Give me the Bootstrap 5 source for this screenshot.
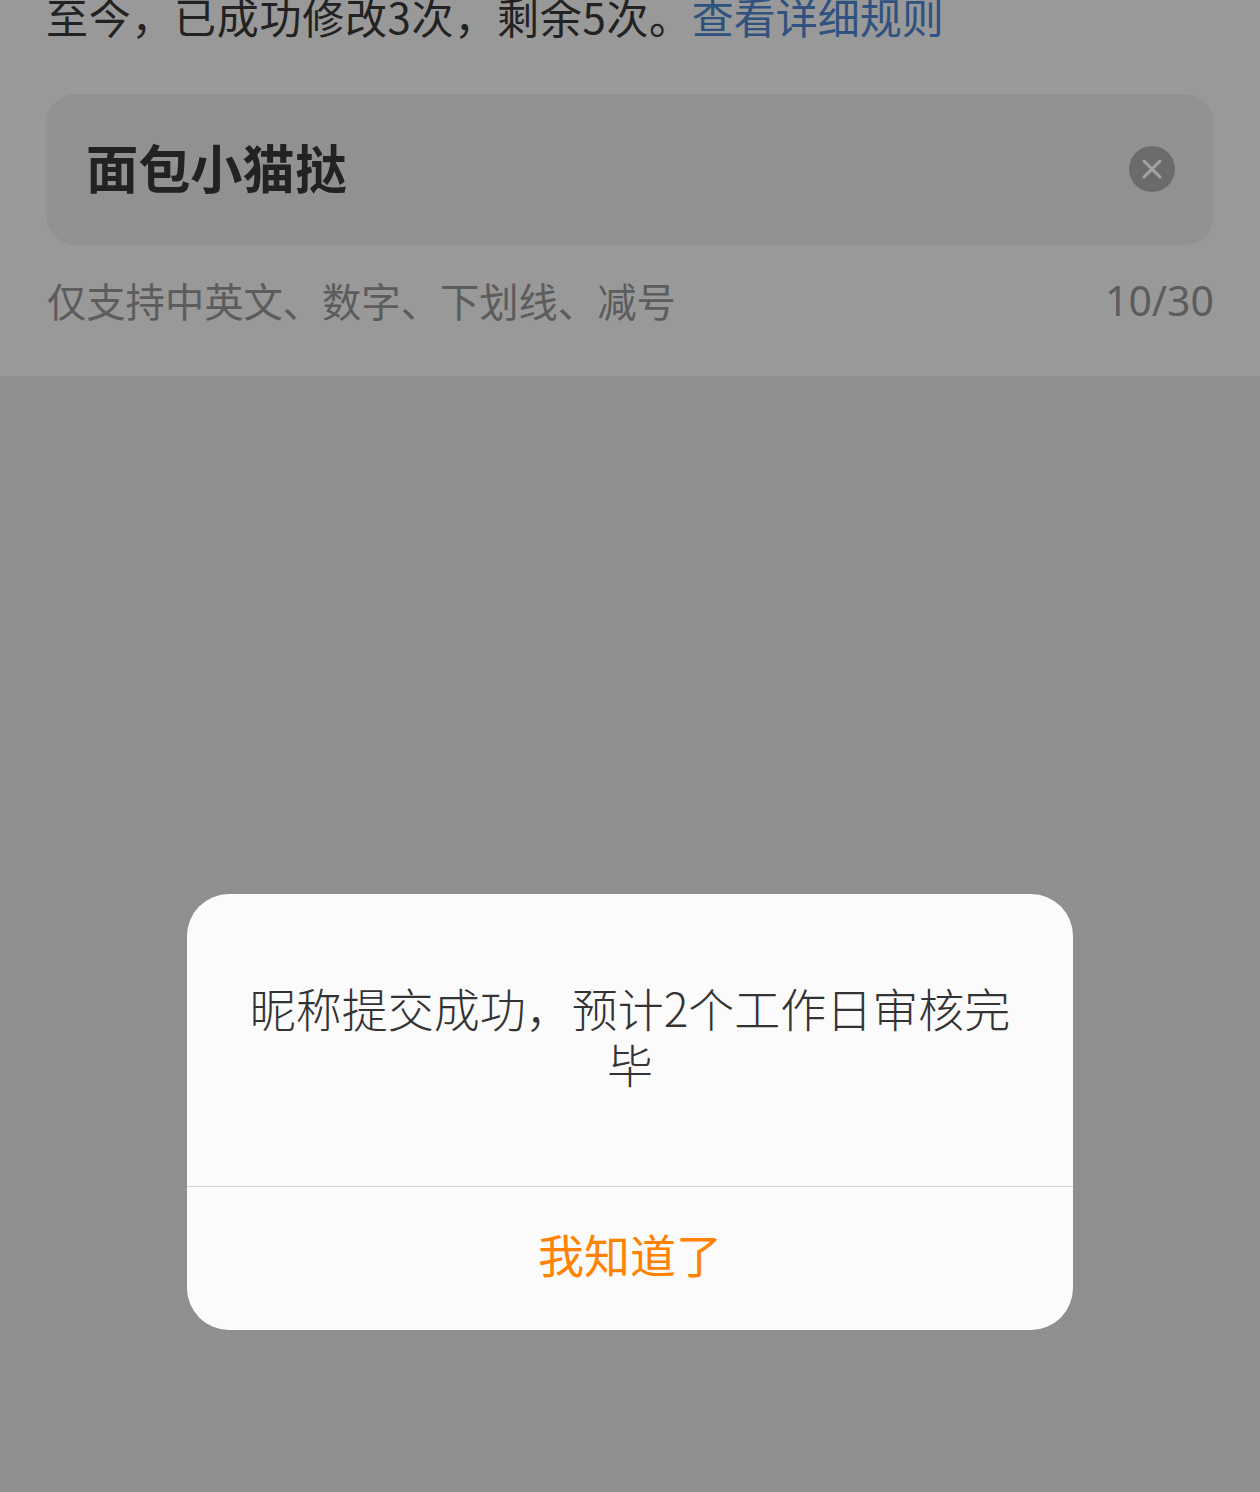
<!DOCTYPE html>
<html lang="zh-CN">
<head>
<meta charset="utf-8">
<title>昵称</title>
<link href="https://cdn.jsdelivr.net/npm/bootstrap@5.3.0/dist/css/bootstrap.min.css" rel="stylesheet">
<style>
html,body{height:1492px;overflow:hidden}
body{background:#8f8f8f;font-family:"Noto Sans CJK SC","Noto Sans",sans-serif;width:1260px}
.top-panel{height:376px;background:#999;padding:0 46px;overflow:hidden}
.intro-line{font-size:42px;line-height:60px;margin:-14px 0 0;color:#222;white-space:nowrap;font-weight:400;height:60px;letter-spacing:.7px}
.intro-line a{color:#2f5280;text-decoration:none;letter-spacing:0}
.name-box{height:151px;margin-top:48px;background:#919191;border-radius:30px;padding:0 39px 2px 40px}
.name-text{font-size:52.2px;font-weight:700;color:#222;line-height:1;margin-bottom:4px}
.clear-dot{width:46px;height:46px;border-radius:50%;background:#6b6b6b}
.hint-row{margin-top:32px;font-size:39.3px;line-height:46px;color:#5c5c5c;font-weight:400;padding-left:1px}
.count-text{font-family:"Noto Sans",sans-serif;font-size:41px}
.dialog-box{width:886px;height:436px;margin:518px auto 0;background:#fbfbfb;border-radius:42px;overflow:hidden}
.dialog-msg{height:293px;padding:85px 60px 0;text-align:center;font-size:46px;line-height:56px;color:#333;font-weight:300;border-bottom:1px solid #d2d2d2}
.dialog-act{height:143px;font-size:46px;color:#ff8200;font-weight:400;padding-bottom:10px}
</style>
</head>
<body>
<section class="top-panel">
  <p class="intro-line">至今，已成功修改3次，剩余5次。<a href="#">查看详细规则</a></p>
  <div class="name-box d-flex align-items-center justify-content-between">
    <span class="name-text">面包小猫挞</span>
    <span class="clear-dot d-flex align-items-center justify-content-center">
      <svg width="20" height="20" viewBox="0 0 20 20" fill="none" stroke="#a3a3a3" stroke-width="3" stroke-linecap="round"><path d="M2 2L18 18M18 2L2 18"/></svg>
    </span>
  </div>
  <div class="hint-row d-flex justify-content-between align-items-center">
    <span>仅支持中英文、数字、下划线、减号</span>
    <span class="count-text">10/30</span>
  </div>
</section>
<section class="dialog-box">
  <div class="dialog-msg">昵称提交成功，预计2个工作日审核完毕</div>
  <div class="dialog-act d-flex align-items-center justify-content-center">我知道了</div>
</section>
<script src="https://cdn.jsdelivr.net/npm/bootstrap@5.3.0/dist/js/bootstrap.bundle.min.js"></script>
</body>
</html>
